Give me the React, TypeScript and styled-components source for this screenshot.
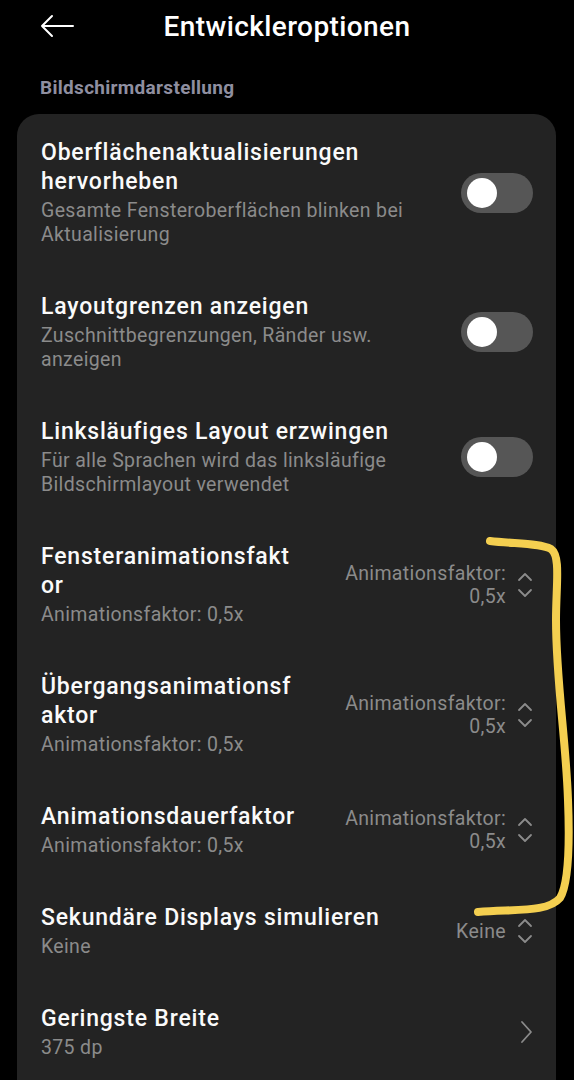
import React from 'react';
import styled, { createGlobalStyle } from 'styled-components';

const GlobalStyle = createGlobalStyle`
  html, body {
    margin: 0;
    padding: 0;
    background: #000;
  }
  body {
    font-family: Roboto, "Noto Sans", "Liberation Sans", sans-serif;
    -webkit-font-smoothing: antialiased;
  }
`;

const Screen = styled.div`
  position: relative;
  width: 574px;
  height: 1080px;
  overflow: hidden;
  background: #000;
  color: #fff;
`;

const Header = styled.header`
  display: grid;
  grid-template-columns: 1fr auto 1fr;
  align-items: center;
  height: 52px;
`;

const BackButton = styled.button`
  justify-self: start;
  display: flex;
  align-items: center;
  margin-left: 40px;
  padding: 0;
  background: none;
  border: none;
  cursor: pointer;
`;

const Title = styled.h1`
  margin: 0;
  font-size: 28px;
  font-weight: 500;
  letter-spacing: 0.4px;
  color: #fff;
`;

const SectionLabel = styled.div`
  padding: 24px 0 0 40px;
  height: 38px;
  font-size: 19px;
  font-weight: 700;
  letter-spacing: 0.3px;
  color: #8f8fa0;
`;

const Card = styled.section`
  margin: 0 18px 0 17px;
  padding-top: 2px;
  background: #232323;
  border-radius: 22px 22px 0 0;
`;

const Row = styled.div`
  display: flex;
  align-items: center;
  gap: 24px;
  padding: 22px 23px 23px 24px;
`;

const TextCol = styled.div`
  flex: 1;
  min-width: 0;
`;

const ItemTitle = styled.div`
  font-size: 23px;
  font-weight: 500;
  letter-spacing: 0.8px;
  line-height: 29px;
  color: #fafafa;
`;

const ItemSub = styled.div`
  margin-top: 3px;
  font-size: 19.5px;
  letter-spacing: 0.35px;
  line-height: 24px;
  color: #8b8b8b;
`;

const Trailing = styled.div`
  margin-left: auto;
  display: flex;
  align-items: center;
  gap: 11px;
`;

const Value = styled.div`
  text-align: right;
  white-space: nowrap;
  font-size: 19.5px;
  letter-spacing: 0.35px;
  line-height: 23px;
  color: #8b8b8b;
`;

const Track = styled.div<{ $on?: boolean }>`
  flex: none;
  width: 72px;
  height: 40px;
  border-radius: 20px;
  background: ${p => (p.$on ? '#3d7df5' : '#565656')};
  display: flex;
  align-items: center;
  justify-content: ${p => (p.$on ? 'flex-end' : 'flex-start')};
  padding: 0 6px;
  box-sizing: border-box;
`;

const Knob = styled.div`
  width: 30px;
  height: 30px;
  border-radius: 50%;
  background: #fff;
`;

const Scribble = styled.svg`
  position: absolute;
  left: 0;
  top: 0;
  pointer-events: none;
`;

const BackArrow = () => (
  <svg width="34" height="24" viewBox="0 0 34 24" fill="none">
    <path d="M33 12H2M12 2L2 12l10 10" stroke="#fff" strokeWidth="2" strokeLinecap="round" strokeLinejoin="round" />
  </svg>
);

const UpDown = () => (
  <svg width="16" height="28" viewBox="0 0 16 28" fill="none">
    <path d="M2 9l6-6 6 6M2 19l6 6 6-6" stroke="#8b8b8b" strokeWidth="1.8" strokeLinecap="round" strokeLinejoin="round" />
  </svg>
);

const ChevronRight = () => (
  <svg width="14" height="24" viewBox="0 0 14 24" fill="none">
    <path d="M3 2l9 10-9 10" stroke="#8b8b8b" strokeWidth="1.8" strokeLinecap="round" strokeLinejoin="round" />
  </svg>
);

const Toggle = ({ on }: { on?: boolean }) => (
  <Track $on={on}>
    <Knob />
  </Track>
);

type Item = {
  title: React.ReactNode;
  sub: string;
  kind: 'toggle' | 'select' | 'link';
  value?: React.ReactNode;
};

const factor = <>Animationsfaktor:<br />0,5x</>;

const items: Item[] = [
  {
    title: 'Oberflächenaktualisierungen hervorheben',
    sub: 'Gesamte Fensteroberflächen blinken bei Aktualisierung',
    kind: 'toggle',
  },
  {
    title: 'Layoutgrenzen anzeigen',
    sub: 'Zuschnittbegrenzungen, Ränder usw. anzeigen',
    kind: 'toggle',
  },
  {
    title: 'Linksläufiges Layout erzwingen',
    sub: 'Für alle Sprachen wird das linksläufige Bildschirmlayout verwendet',
    kind: 'toggle',
  },
  {
    title: <>Fensteranimationsfakt<br />or</>,
    sub: 'Animationsfaktor: 0,5x',
    kind: 'select',
    value: factor,
  },
  {
    title: <>Übergangsanimationsf<br />aktor</>,
    sub: 'Animationsfaktor: 0,5x',
    kind: 'select',
    value: factor,
  },
  {
    title: 'Animationsdauerfaktor',
    sub: 'Animationsfaktor: 0,5x',
    kind: 'select',
    value: factor,
  },
  {
    title: 'Sekundäre Displays simulieren',
    sub: 'Keine',
    kind: 'select',
    value: 'Keine',
  },
  {
    title: 'Geringste Breite',
    sub: '375 dp',
    kind: 'link',
  },
];

export default function App() {
  return (
    <Screen>
      <GlobalStyle />
      <Header>
        <BackButton aria-label="Zurück">
          <BackArrow />
        </BackButton>
        <Title>Entwickleroptionen</Title>
        <div />
      </Header>

      <SectionLabel>Bildschirmdarstellung</SectionLabel>

      <Card>
        {items.map((item, i) => (
          <Row key={i}>
            <TextCol>
              <ItemTitle>{item.title}</ItemTitle>
              <ItemSub>{item.sub}</ItemSub>
            </TextCol>
            {item.kind === 'toggle' && <Toggle />}
            {item.kind === 'select' && (
              <Trailing>
                <Value>{item.value}</Value>
                <UpDown />
              </Trailing>
            )}
            {item.kind === 'link' && (
              <Trailing>
                <ChevronRight />
              </Trailing>
            )}
          </Row>
        ))}
      </Card>

      {/* yellow hand-drawn marker over the animation rows */}
      <Scribble width="574" height="1080" viewBox="0 0 574 1080">
        <path
          d="M490 541 C515 544, 540 543, 551 549 C561 556, 556 585, 556 620 C556 680, 566 740, 568 800 C570 850, 568 885, 560 898 C548 912, 520 909, 478 912"
          fill="none"
          stroke="#f4cf50"
          strokeWidth="8"
          strokeLinecap="round"
          strokeLinejoin="round"
        />
      </Scribble>
    </Screen>
  );
}
